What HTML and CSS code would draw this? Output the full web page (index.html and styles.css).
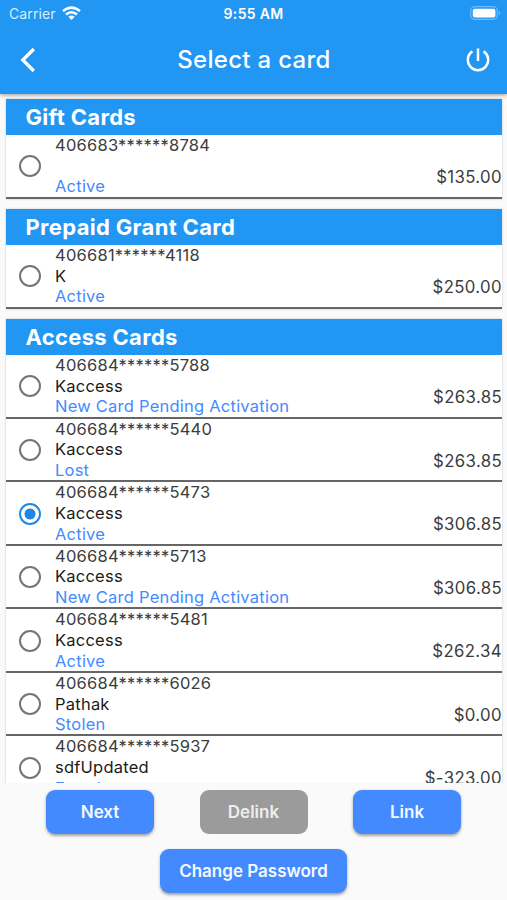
FILE: index.html
```html
<!DOCTYPE html>
<html lang="en">
<head>
<meta charset="utf-8">
<title>Select a card</title>
<link rel="stylesheet" href="styles.css">
</head>
<body>
<header class="top">
  <div class="status">
    <div class="carrier"><span>Carrier</span>
      <svg width="19" height="15" viewBox="0 0 19 15"><g fill="none" stroke="#fff" stroke-width="2.5"><path d="M1 5.1Q9.5-1.9 18 5.1"/><path d="M4 8.5Q9.5 3.9 15 8.5"/></g><path fill="#fff" d="M6.3 10.7Q9.5 8.3 12.7 10.7L9.5 14Z"/></svg>
    </div>
    <span class="clock">9:55 AM</span>
    <svg class="battery" width="31" height="15" viewBox="0 0 31 15"><rect x=".7" y=".7" width="26.6" height="12.6" rx="4" fill="none" stroke="#72baf8" stroke-width="1.2"/><rect x="2.8" y="2.8" width="22.6" height="8.6" rx="2" fill="#fff"/><path d="M28.8 4.5q3 2.5 0 5z" fill="#72baf8"/></svg>
  </div>
  <nav class="bar">
    <svg width="16" height="26" viewBox="0 0 16 26"><path d="M13.8 2L2.8 13L13.8 24" fill="none" stroke="#fff" stroke-width="3.3"/></svg>
    <h1>Select a card</h1>
    <svg width="24" height="24" viewBox="0 0 24 24"><path d="M12 .5v12.5M6.4 3.4A10.2 10.2 0 1 0 17.6 3.4" fill="none" stroke="#fff" stroke-width="2.5"/></svg>
  </nav>
</header>
<main class="list">
  <section class="group">
    <h2>Gift Cards</h2>
    <div class="row"><i class="radio"></i><div class="info"><span>406683******8784</span><span class="name"></span><span class="state">Active</span></div><span class="amount">$135.00</span></div>
  </section>
  <section class="group">
    <h2>Prepaid Grant Card</h2>
    <div class="row"><i class="radio"></i><div class="info"><span>406681******4118</span><span class="name">K</span><span class="state">Active</span></div><span class="amount">$250.00</span></div>
  </section>
  <section class="group">
    <h2>Access Cards</h2>
    <div class="row"><i class="radio"></i><div class="info"><span>406684******5788</span><span class="name">Kaccess</span><span class="state">New Card Pending Activation</span></div><span class="amount">$263.85</span></div>
    <div class="row"><i class="radio"></i><div class="info"><span>406684******5440</span><span class="name">Kaccess</span><span class="state">Lost</span></div><span class="amount">$263.85</span></div>
    <div class="row"><i class="radio on"></i><div class="info"><span>406684******5473</span><span class="name">Kaccess</span><span class="state">Active</span></div><span class="amount">$306.85</span></div>
    <div class="row"><i class="radio"></i><div class="info"><span>406684******5713</span><span class="name">Kaccess</span><span class="state">New Card Pending Activation</span></div><span class="amount">$306.85</span></div>
    <div class="row"><i class="radio"></i><div class="info"><span>406684******5481</span><span class="name">Kaccess</span><span class="state">Active</span></div><span class="amount">$262.34</span></div>
    <div class="row"><i class="radio"></i><div class="info"><span>406684******6026</span><span class="name">Pathak</span><span class="state">Stolen</span></div><span class="amount">$0.00</span></div>
    <div class="row"><i class="radio"></i><div class="info"><span>406684******5937</span><span class="name">sdfUpdated</span><span class="state">Fraud</span></div><span class="amount">$-323.00</span></div>
  </section>
</main>
<footer class="actions">
  <div class="trio"><button>Next</button><button class="off">Delink</button><button>Link</button></div>
  <button class="wide">Change Password</button>
</footer>
</body>
</html>
```
FILE: styles.css
```css
* { box-sizing: border-box; }
body {
  margin: 0;
  height: 900px;
  display: flex;
  flex-direction: column;
  overflow: hidden;
  background: #fafafa;
  font-family: Inter, "Liberation Sans", sans-serif;
  font-size: 16.5px;
}
svg { display: block; }
.top {
  flex: none;
  height: 94px;
  background: #2196f3;
  color: #fff;
  box-shadow: 0 1px 4px rgba(0, 0, 0, .4);
  z-index: 1;
}
.status {
  height: 28px;
  padding: 0 6px 0 9px;
  display: grid;
  grid-template-columns: 1fr auto 1fr;
  align-items: center;
  font-size: 14px;
}
.carrier {
  display: flex;
  align-items: center;
  gap: 6px;
  color: #d9edfd;
  letter-spacing: .1px;
  margin-top: -1px;
}
.carrier svg { margin-top: -1px; }
.clock { font-weight: 600; font-size: 14px; letter-spacing: .3px; margin: -1px 3px 0 0; }
.battery { justify-self: end; margin: -1px 0 0; }
.bar {
  height: 64px;
  padding: 0 17px 0 20px;
  display: flex;
  align-items: center;
  justify-content: space-between;
}
h1 {
  margin: -1px 0 0 6px;
  font-size: 24px;
  font-weight: 500;
  letter-spacing: .3px;
}
.list {
  height: 689px;
  padding: 4.5px 5px 0 6px;
  overflow: hidden;
}
.group {
  margin-bottom: 10px;
  background: #fff;
  box-shadow: 0 0 2px rgba(0, 0, 0, .22);
}
h2 {
  margin: 0;
  height: 36.5px;
  padding-left: 19.5px;
  background: #2196f3;
  color: #fff;
  font-size: 22px;
  font-weight: 700;
  letter-spacing: .32px;
  line-height: 37px;
}
.row {
  height: 63.55px;
  display: flex;
  align-items: flex-start;
  border-bottom: 2px solid #666;
  color: #3c3c3c;
}
.radio {
  flex: none;
  width: 22px;
  height: 22px;
  margin: 20.4px 14px 0 13px;
  border: 2.5px solid #757575;
  border-radius: 50%;
}
.radio.on {
  border-color: #1e88e5;
  background: radial-gradient(circle, #1e88e5 5.2px, transparent 5.8px);
}
.info { flex: 1; }
.info span {
  display: block;
  height: 20.7px;
  line-height: 20.7px;
  letter-spacing: .23px;
  white-space: nowrap;
}
.info .name { color: #1b1b1b; }
.info .state { color: #448aff; }
.amount { margin-top: 32px; font-size: 16.8px; line-height: 21px; letter-spacing: .35px; }
.actions {
  flex: 1;
  display: flex;
  flex-direction: column;
  align-items: center;
  padding-top: 7px;
  gap: 15px;
}
.trio { display: flex; gap: 45.5px; }
button {
  width: 108px;
  height: 44px;
  padding: 0;
  border: 0;
  border-radius: 9px;
  background: #448aff;
  color: #f5f9ff;
  font-family: inherit;
  font-size: 17px;
  font-weight: 600;
  box-shadow: 0 1.5px 3px rgba(0, 0, 0, .35);
}
.off { background: #9b9b9b; color: #eee; box-shadow: none; }
.wide { width: 187px; }
```
